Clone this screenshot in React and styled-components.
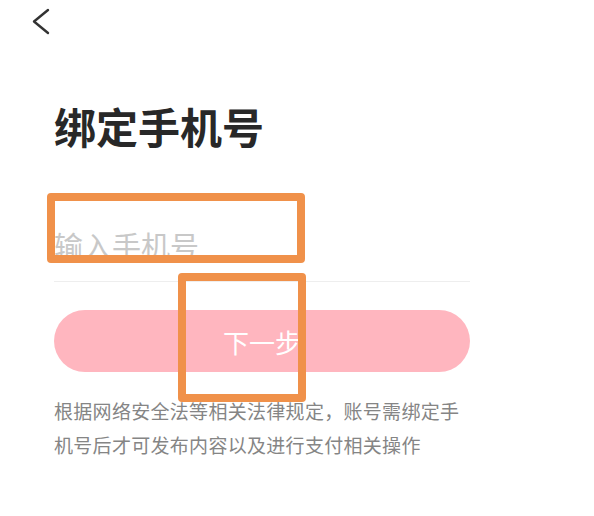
import React from 'react';
import styled, { createGlobalStyle } from 'styled-components';

const GlobalStyle = createGlobalStyle`
  html, body {
    margin: 0;
    padding: 0;
    background: #fff;
  }
  body {
    font-family: "Noto Sans CJK SC", "Noto Sans", sans-serif;
  }
`;

const Page = styled.div`
  position: relative;
  width: 594px;
  height: 516px;
  overflow: hidden;
  background: #fff;
`;

const Header = styled.div`
  height: 46px;
  padding-left: 31px;
  padding-top: 7px;
  box-sizing: border-box;

  svg {
    display: block;
  }
`;

const Content = styled.div`
  width: 416px;
  padding-left: 54px;
`;

const Title = styled.h1`
  margin: 52px 0 0;
  font-size: 42px;
  line-height: 56px;
  font-weight: 700;
  color: #282828;
`;

const Field = styled.div`
  margin-top: 71px;
  padding-bottom: 16px;
  border-bottom: 1px solid #eeeeee;

  input {
    display: block;
    width: 100%;
    height: 40px;
    padding: 0;
    border: none;
    outline: none;
    font-family: inherit;
    font-size: 29px;
    line-height: 40px;
    color: #333;
    background: transparent;

    &::placeholder {
      color: #c8c8c8;
    }
  }
`;

const NextButton = styled.button`
  display: flex;
  align-items: center;
  justify-content: center;
  width: 100%;
  height: 62px;
  margin-top: 28px;
  border: none;
  border-radius: 31px;
  background: #ffb6bf;
  color: #fff;
  font-family: inherit;
  font-size: 26px;
  cursor: pointer;
`;

const Notice = styled.p`
  margin: 22px 0 0;
  font-size: 19px;
  line-height: 34px;
  letter-spacing: 0.3px;
  color: #858585;
`;

// orange annotation frames drawn over the page
const Mark = styled.div`
  position: absolute;
  box-sizing: border-box;
  border: 8px solid #f0914a;
  border-radius: 4px;
  left: ${({ $x }) => $x}px;
  top: ${({ $y }) => $y}px;
  width: ${({ $w }) => $w}px;
  height: ${({ $h }) => $h}px;
`;

const BackIcon = () => (
  <svg width="20" height="30" viewBox="0 0 20 30">
    <polyline
      points="17,3 3,14.5 17,26"
      fill="none"
      stroke="#333"
      strokeWidth="2.4"
      strokeLinecap="round"
      strokeLinejoin="round"
    />
  </svg>
);

const App = () => {
  return (
    <>
      <GlobalStyle />
      <Page>
        <Header>
          <BackIcon />
        </Header>
        <Content>
          <Title>绑定手机号</Title>
          <Field>
            <input type="tel" placeholder="输入手机号" />
          </Field>
          <NextButton type="button">下一步</NextButton>
          <Notice>根据网络安全法等相关法律规定，账号需绑定手机号后才可发布内容以及进行支付相关操作</Notice>
        </Content>
        <Mark $x={47} $y={193} $w={258} $h={70} />
        <Mark $x={178} $y={273} $w={128} $h={129} />
      </Page>
    </>
  );
};

export default App;
